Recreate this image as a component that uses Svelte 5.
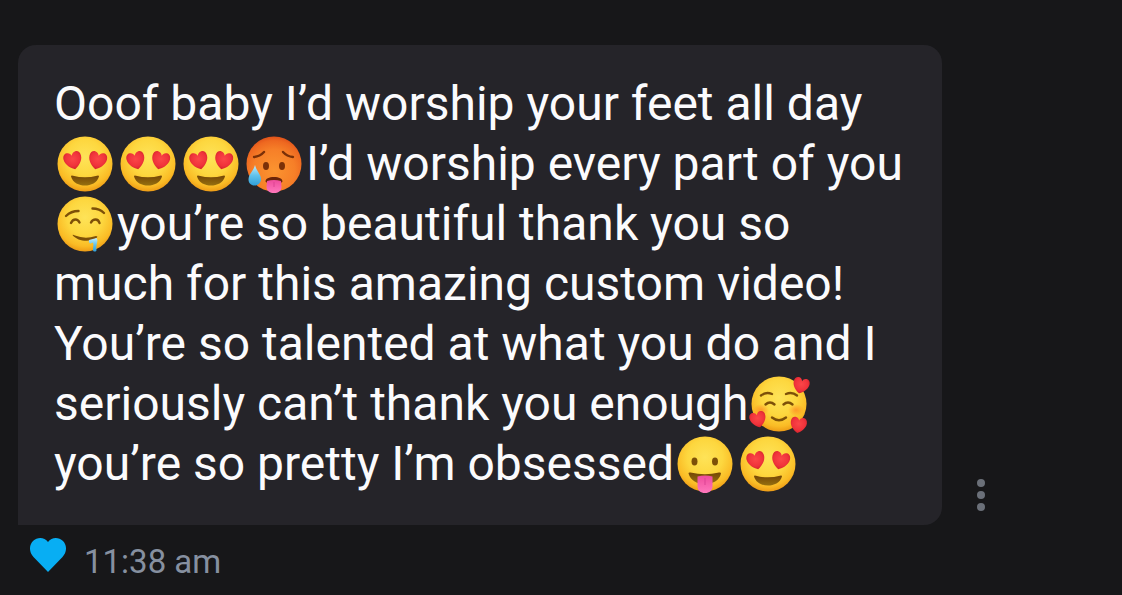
<script>
  let liked = $state(true);

  const message = [
    { text: 'Ooof baby I’d worship your feet all day ' },
    { emoji: 'hearteyes' },
    { emoji: 'hearteyes' },
    { emoji: 'hearteyes' },
    { emoji: 'hot' },
    { text: 'I’d worship every part of you ' },
    { emoji: 'drool' },
    { text: 'you’re so beautiful thank you so much for this amazing custom video! You’re so talented at what you do and I seriously can’t thank you enough' },
    { emoji: 'loved' },
    { text: ' you’re so pretty I’m obsessed' },
    { emoji: 'tongue' },
    { emoji: 'hearteyes' }
  ];

  const labels = {
    hearteyes: '😍',
    hot: '🥵',
    drool: '🤤',
    loved: '🥰',
    tongue: '😛'
  };
</script>

{#snippet heart(x, y, turn, size)}
  <path
    transform="translate({x} {y}) rotate({turn}) scale({size})"
    d="M0 9 C-3 7.500 -9 3 -9 -3 C-9 -6.500 -7 -8.500 -4.500 -8.500 C-2.200 -8.500 -0.700 -7 0 -5 C0.700 -7 2.200 -8.500 4.500 -8.500 C7 -8.500 9 -6.500 9 -3 C9 3 3 7.500 0 9 Z"
    fill="url(#red)"
  />
{/snippet}

{#snippet face(name)}
  <svg class="emoji" viewBox="0 0 63 60" role="img" aria-label={labels[name]}>
    <circle cx="31" cy="30" r="27.5" fill={name === 'hot' ? 'url(#orange)' : 'url(#yellow)'} />
    {#if name === 'hearteyes'}
      {@render heart(19, 26.5, -14, 1)}
      {@render heart(43.5, 26.5, 14, 1)}
      <path d="M17 42.500 Q17 41 19 41.700 Q31 45 43 41.700 Q45 41 45 42.500 C43 49 37 51.500 31 51.500 C25 51.500 19 49 17 42.500 Z" fill="url(#mouth)" />
    {:else if name === 'hot'}
      <g class="line hot-line">
        <path d="M11 23 Q17 22.500 21 18" />
        <path d="M40 18 Q44 22.500 50 23" />
      </g>
      <ellipse cx="23" cy="32" rx="3" ry="4" fill="#7a3008" />
      <ellipse cx="39" cy="32" rx="3" ry="4" fill="#7a3008" />
      <path d="M22.500 47.500 C22.500 44.500 26 43 31 43 C36 43 39.500 44.500 39.500 47.500 Q39 49 37 48.500 H25 Q23 49 22.500 47.500 Z" fill="#6b2408" />
      <path d="M24 47 Q31 45 38 47 L38.500 53 C38.500 57 35 59 31 59 C27 59 23.500 57 23.500 53 Z" fill="url(#pink)" />
      <path d="M31 48 V53" stroke="#dd4494" stroke-width="1" />
      <path d="M12 31 C13 36 18 40.500 18 45 C18 49 15 51.500 11.500 51.500 C8 51.500 5.500 49 5.500 45.500 C5.500 40.500 11 36 12 31 Z" fill="url(#water)" />
    {:else if name === 'drool'}
      <g class="line">
        <path d="M12 22 Q17 17 24.500 17" />
        <path d="M38.500 14.500 Q45.500 14.500 50 19" />
        <path d="M17 29 Q18.500 25.500 21.500 25.500 Q24 25.500 25.500 28.500" />
        <path d="M37 28.500 Q38.500 25.500 41.500 25.500 Q44.500 25.500 45.500 29" />
      </g>
      <path d="M18.500 41 Q19 40.500 21 41.500 Q31 45.500 42 42 Q44 42 43 43.500 C37 48.500 24 48 18.500 41 Z" fill="#7d5008" />
      <path d="M35 46 L42.500 44 C45 47 41.500 50 42.500 56 C42.500 58 39 58 39 56 C39 52 40.500 49 38 48.500 C37 50.500 34 49 35 46 Z" fill="url(#water)" />
    {:else if name === 'loved'}
      <ellipse cx="13" cy="36" rx="8" ry="6" fill="url(#blush)" />
      <ellipse cx="48" cy="36" rx="8" ry="6" fill="url(#blush)" />
      <g class="line">
        <path d="M13 21.500 Q18 17.500 24 20" />
        <path d="M38 20 Q44 17.500 49 21.500" />
        <path d="M17.500 30.500 Q22 26.500 26.500 30.500" />
        <path d="M35.500 30.500 Q40 26.500 44.500 30.500" />
        <path d="M24 43.500 Q31 49 38 43.500" />
      </g>
      {@render heart(53, 11.5, 14, 0.9)}
      {@render heart(10, 45.5, -14, 0.9)}
      {@render heart(50.5, 51, 8, 0.9)}
    {:else}
      <ellipse cx="20.500" cy="27.500" rx="3" ry="4" fill="#7d5008" />
      <ellipse cx="41" cy="27.500" rx="3" ry="4" fill="#7d5008" />
      <path d="M14.500 39.500 Q14.500 38 16.500 38.500 Q31 42 45 38.500 Q47 38 47 39.500 C45.500 46.500 38.500 50 31 50 C23.500 50 16.500 47 14.500 39.500 Z" fill="url(#mouth)" />
      <path d="M23.500 42.500 Q31 40.500 38.500 42.500 V52 C38.500 56.500 35.500 59 31 59 C26.500 59 23.500 56.500 23.500 52 Z" fill="url(#pink)" />
      <path d="M31 44 V51" stroke="#dd4494" stroke-width="1" />
    {/if}
  </svg>
{/snippet}

<!-- gradients shared by all the emoji -->
<svg class="defs" width="0" height="0" aria-hidden="true">
  <defs>
    <radialGradient id="yellow" cx="0.500" cy="0.380" r="0.640">
      <stop offset="0" stop-color="#fee358" />
      <stop offset="0.500" stop-color="#fdd73f" />
      <stop offset="0.820" stop-color="#fabb25" />
      <stop offset="1" stop-color="#eb9513" />
    </radialGradient>
    <radialGradient id="orange" cx="0.500" cy="0.620" r="0.640">
      <stop offset="0" stop-color="#fb9430" />
      <stop offset="0.600" stop-color="#f67f28" />
      <stop offset="0.850" stop-color="#ee6820" />
      <stop offset="1" stop-color="#dc4c18" />
    </radialGradient>
    <radialGradient id="red" cx="0.500" cy="0.400" r="0.650">
      <stop offset="0" stop-color="#fb4648" />
      <stop offset="0.600" stop-color="#f0333b" />
      <stop offset="1" stop-color="#cc1f28" />
    </radialGradient>
    <radialGradient id="blush">
      <stop offset="0" stop-color="#ff7a1f" stop-opacity="0.600" />
      <stop offset="1" stop-color="#ff7a1f" stop-opacity="0" />
    </radialGradient>
    <linearGradient id="mouth" x1="0" y1="0" x2="0" y2="1">
      <stop offset="0" stop-color="#744606" />
      <stop offset="1" stop-color="#96700f" />
    </linearGradient>
    <linearGradient id="pink" x1="0" y1="0" x2="0" y2="1">
      <stop offset="0" stop-color="#ee4c9c" />
      <stop offset="1" stop-color="#ff78bd" />
    </linearGradient>
    <linearGradient id="water" x1="0" y1="0" x2="0" y2="1">
      <stop offset="0" stop-color="#c4ecfb" />
      <stop offset="0.500" stop-color="#62c3ec" />
      <stop offset="1" stop-color="#309fd8" />
    </linearGradient>
  </defs>
</svg>

<main>
  <div class="row">
    <p class="bubble">{#each message as part}{#if part.text}{part.text}{:else}{@render face(part.emoji)}{/if}{/each}</p>
    <button class="more" aria-label="More options">
      <svg viewBox="0 0 8 32" width="8" height="32">
        <circle cx="4" cy="4" r="4" />
        <circle cx="4" cy="16" r="4" />
        <circle cx="4" cy="28" r="4" />
      </svg>
    </button>
  </div>

  <footer>
    <button class="like" class:liked aria-label="Like" aria-pressed={liked} onclick={() => (liked = !liked)}>
      <svg viewBox="0 0 36 34" width="36" height="34">
        <path d="M18 34 L3.500 19 C-1.200 14.200 -1 7 3 3 C7.500 -1.200 14.500 -0.800 18 4 C21.500 -0.800 28.500 -1.200 33 3 C37 7 37.200 14.200 32.500 19 Z" />
      </svg>
    </button>
    <time datetime="11:38">11:38 am</time>
  </footer>
</main>

<style>
  :global(body) {
    margin: 0;
    background: #171719;
    font-family: Roboto, sans-serif;
  }

  .defs {
    position: absolute;
  }

  main {
    padding: 45px 18px 0;
  }

  .row {
    display: flex;
    align-items: flex-end;
    gap: 35px;
  }

  .bubble {
    box-sizing: border-box;
    max-width: 924px;
    margin: 0;
    padding: 29px 36px 31px;
    border-radius: 18px 18px 18px 0;
    background: #252429;
    color: #fbfbfd;
    font-size: 48px;
    line-height: 60px;
  }

  .emoji {
    width: 63px;
    height: 60px;
    vertical-align: top;
  }

  .line {
    fill: none;
    stroke: #7d5008;
    stroke-width: 2.4;
    stroke-linecap: round;
  }

  .hot-line {
    stroke: #7a3008;
  }

  button {
    display: flex;
    padding: 0;
    border: 0;
    background: none;
    cursor: pointer;
  }

  .more {
    padding-bottom: 14px;
    fill: #6b7079;
  }

  footer {
    display: flex;
    align-items: flex-start;
    gap: 18px;
    padding: 13px 12px 0;
  }

  .like {
    fill: #6b7079;
  }

  .liked {
    fill: #08aef3;
  }

  time {
    padding-top: 4px;
    color: #8690a0;
    font-size: 33px;
    line-height: 40px;
  }
</style>
